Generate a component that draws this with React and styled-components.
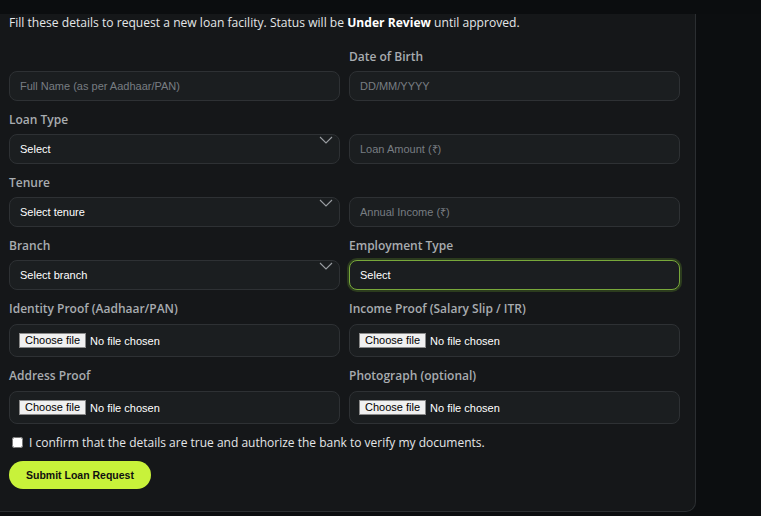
import styled, { createGlobalStyle } from "styled-components";

const Global = createGlobalStyle`
  html, body {
    margin: 0;
    background: #0c0e10;
  }
  * {
    box-sizing: border-box;
  }
`;

function FilePicker() {
  return (
    <FileBox>
      <HiddenFile type="file" />
      <FileButton>Choose file</FileButton>
      <FileName>No file chosen</FileName>
    </FileBox>
  );
}

function Chevron() {
  return (
    <ChevronIcon width="14" height="8" viewBox="0 0 14 8">
      <path d="M1 1l6 6 6-6" fill="none" stroke="#9a9ea2" strokeWidth="1.1" />
    </ChevronIcon>
  );
}

export default function App() {
  return (
    <>
      <Global />
      <TopBar />
      <Card>
        <Intro>
          Fill these details to request a new loan facility. Status will be{" "}
          <strong>Under Review</strong> until approved.
        </Intro>
        <FormGrid>
          <Field>
            <Label />
            <TextInput placeholder="Full Name (as per Aadhaar/PAN)" />
          </Field>
          <Field>
            <Label>Date of Birth</Label>
            <TextInput placeholder="DD/MM/YYYY" />
          </Field>

          <Field>
            <Label>Loan Type</Label>
            <SelectBox>
              <Select defaultValue="">
                <option value="">Select</option>
              </Select>
              <Chevron />
            </SelectBox>
          </Field>
          <Field>
            <Label />
            <TextInput placeholder="Loan Amount (₹)" />
          </Field>

          <Field>
            <Label>Tenure</Label>
            <SelectBox>
              <Select defaultValue="">
                <option value="">Select tenure</option>
              </Select>
              <Chevron />
            </SelectBox>
          </Field>
          <Field>
            <Label />
            <TextInput placeholder="Annual Income (₹)" />
          </Field>

          <Field>
            <Label>Branch</Label>
            <SelectBox>
              <Select defaultValue="">
                <option value="">Select branch</option>
              </Select>
              <Chevron />
            </SelectBox>
          </Field>
          <Field>
            <Label>Employment Type</Label>
            <SelectBox>
              <Select defaultValue="" $focused>
                <option value="">Select</option>
              </Select>
            </SelectBox>
          </Field>

          <Field>
            <Label $file>Identity Proof (Aadhaar/PAN)</Label>
            <FilePicker />
          </Field>
          <Field>
            <Label $file>Income Proof (Salary Slip / ITR)</Label>
            <FilePicker />
          </Field>

          <Field>
            <Label $file>Address Proof</Label>
            <FilePicker />
          </Field>
          <Field>
            <Label $file>Photograph (optional)</Label>
            <FilePicker />
          </Field>
        </FormGrid>

        <Confirm>
          <input type="checkbox" />
          I confirm that the details are true and authorize the bank to verify my documents.
        </Confirm>

        <SubmitButton>Submit Loan Request</SubmitButton>
      </Card>
    </>
  );
}

const TopBar = styled.div`
  height: 14px;
  background: #0b0d0f;
`;

const Card = styled.div`
  width: 696px;
  padding: 0 15px 22px 9px;
  background: #151719;
  border-right: 1px solid #2b2e31;
  border-bottom: 1px solid #2b2e31;
  border-bottom-right-radius: 10px;
`;

const Intro = styled.p`
  margin: 0;
  font-family: "Open Sans", "Noto Sans", sans-serif;
  font-size: 12.1px;
  line-height: 18px;
  color: #e4e6e8;

  strong {
    font-weight: 700;
    color: #ffffff;
  }
`;

const FormGrid = styled.div`
  display: grid;
  grid-template-columns: 1fr 1fr;
  column-gap: 9px;
  row-gap: 9px;
  margin-top: 15px;
`;

const Field = styled.div`
  display: flex;
  flex-direction: column;
`;

const Label = styled.label`
  display: block;
  height: 19px;
  padding-top: 1px;
  margin-bottom: ${(p) => (p.$file ? "6px" : "5px")};
  font-family: "Open Sans", "Noto Sans", sans-serif;
  font-size: 12px;
  font-weight: 600;
  line-height: 18px;
  color: #a8acb0;
`;

const boxStyle = `
  width: 100%;
  height: 30px;
  padding: 0 10px;
  background: #1b1e20;
  border: 1px solid #2e3134;
  border-radius: 8px;
  font-family: "Liberation Sans", Arial, sans-serif;
  font-size: 11px;
  color: #ffffff;
  outline: none;
`;

const TextInput = styled.input`
  ${boxStyle}

  &::placeholder {
    color: #787d82;
  }
`;

const SelectBox = styled.div`
  position: relative;
`;

const Select = styled.select`
  ${boxStyle}
  appearance: none;
  border-color: ${(p) => (p.$focused ? "#78a83a" : "#2e3134")};
  border-width: ${(p) => (p.$focused ? "1.5px" : "1px")};
  box-shadow: ${(p) => (p.$focused ? "0 0 0 2px rgba(90, 130, 40, 0.35)" : "none")};
`;

const ChevronIcon = styled.svg`
  position: absolute;
  top: 2px;
  right: 7px;
  pointer-events: none;
`;

const FileBox = styled.label`
  ${boxStyle}
  display: flex;
  align-items: center;
  height: 33px;
  padding: 0 9px;
  cursor: pointer;
`;

const HiddenFile = styled.input`
  display: none;
`;

const FileButton = styled.span`
  display: inline-block;
  height: 15px;
  padding: 0 5px;
  margin-right: 4px;
  background: #f0f0f0;
  border: 1px solid #8a8a8a;
  font-size: 11px;
  line-height: 13px;
  color: #000;
`;

const FileName = styled.span`
  font-size: 11px;
  color: #ffffff;
`;

const Confirm = styled.label`
  display: flex;
  align-items: center;
  gap: 6px;
  margin-top: 10px;
  height: 17px;
  font-family: "Open Sans", "Noto Sans", sans-serif;
  font-size: 12px;
  color: #e4e6e8;

  input {
    margin: 0 0 0 3px;
    width: 11px;
    height: 11px;
  }
`;

const SubmitButton = styled.button`
  display: block;
  margin-top: 10px;
  height: 28px;
  padding: 0 17px;
  border: none;
  border-radius: 14px;
  background: #c8f23a;
  font-family: "Liberation Sans", Arial, sans-serif;
  font-size: 10.5px;
  font-weight: 700;
  color: #101010;
`;
